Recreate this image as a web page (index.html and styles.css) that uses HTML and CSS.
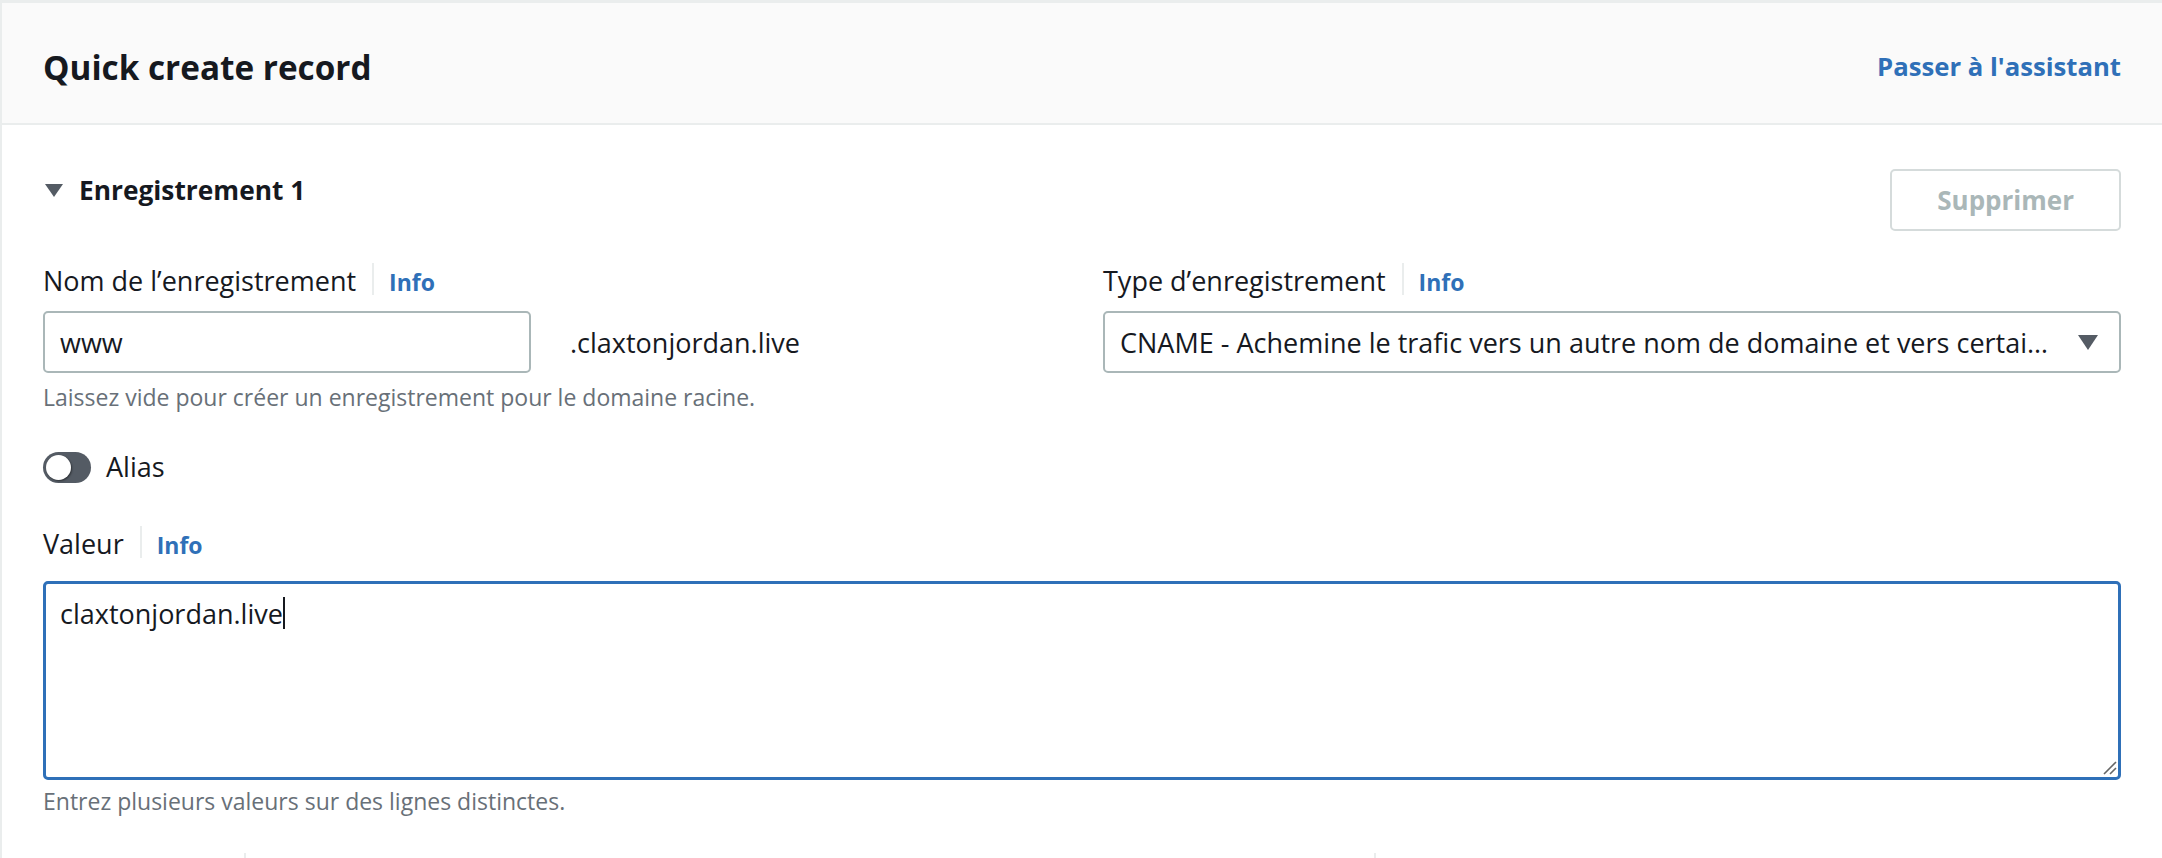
FILE: index.html
```html
<!DOCTYPE html>
<html lang="fr">
<head>
<meta charset="utf-8">
<title>Quick create record</title>
<link rel="stylesheet" href="styles.css">
</head>
<body>
<div class="card">
  <header class="card-header">
    <h2 class="card-title">Quick create record</h2>
    <a class="link-strong" href="#">Passer à l'assistant</a>
  </header>
  <div class="card-body">
    <section class="record">
      <div class="record-head">
        <div class="expander">
          <svg class="expander-icon" width="18" height="13" viewBox="0 0 18 13"><path d="M0 0 H18 L9 13 Z" fill="#545b64"/></svg>
          <span>Enregistrement 1</span>
        </div>
        <button class="btn" type="button" disabled>Supprimer</button>
      </div>

      <div class="grid">
        <div class="field">
          <div class="label-row"><span class="label">Nom de l’enregistrement</span><span class="sep"></span><a class="info" href="#">Info</a></div>
          <div class="name-row">
            <div class="input">www</div>
            <span class="suffix">.claxtonjordan.live</span>
          </div>
          <p class="hint">Laissez vide pour créer un enregistrement pour le domaine racine.</p>
        </div>
        <div class="field">
          <div class="label-row"><span class="label">Type d’enregistrement</span><span class="sep"></span><a class="info" href="#">Info</a></div>
          <div class="select">
            <span class="select-text">CNAME - Achemine le trafic vers un autre nom de domaine et vers certains enregistrements AWS</span>
            <svg class="select-arrow" width="20" height="15" viewBox="0 0 20 15"><path d="M0 0 H20 L10 15 Z" fill="#545b64"/></svg>
          </div>
        </div>
      </div>

      <div class="toggle-row">
        <span class="toggle"><span class="knob"></span></span>
        <span class="toggle-label">Alias</span>
      </div>

      <div class="field value-field">
        <div class="label-row"><span class="label">Valeur</span><span class="sep"></span><a class="info" href="#">Info</a></div>
        <div class="textarea"><span class="ta-text">claxtonjordan.live</span><span class="cursor"></span>
          <svg class="resize" width="14" height="14" viewBox="0 0 14 14"><path d="M13 1 L1 13 M13 7 L7 13" stroke="#666" stroke-width="1.6" fill="none"/></svg>
        </div>
        <p class="hint hint-tight">Entrez plusieurs valeurs sur des lignes distinctes.</p>
      </div>

      <div class="grid next-row">
        <div class="label-row"><span class="label">TTL (secondes)</span><span class="sep"></span><a class="info" href="#">Info</a></div>
        <div class="label-row"><span class="label">Politique de routage</span><span class="sep"></span><a class="info" href="#">Info</a></div>
      </div>
    </section>
  </div>
</div>
</body>
</html>
```

FILE: styles.css
```css
* { box-sizing: border-box; }

html, body {
  margin: 0;
  padding: 0;
  overflow: hidden;
  background: #ffffff;
}

body {
  font-family: "Open Sans", "Noto Sans", sans-serif;
  font-size: 27px;
  color: #16191f;
}

.card {
  border-top: 3px solid #eaeded;
  border-left: 2px solid #eaeded;
  min-height: 855px;
}

.card-header {
  height: 122px;
  padding: 7px 41px 0 41px;
  background: #fafafa;
  border-bottom: 2px solid #eaeded;
  display: flex;
  align-items: center;
  justify-content: space-between;
}

.card-title {
  margin: 0;
  font-size: 33.3px;
  font-weight: 700;
  line-height: 44px;
  color: #16191f;
}

.link-strong {
  font-size: 25.7px;
  font-weight: 700;
  color: #2f70b8;
  text-decoration: none;
  line-height: 40px;
}

.card-body {
  padding: 0 41px;
}

.record-head {
  margin-top: 44px;
  display: flex;
  justify-content: space-between;
  align-items: flex-start;
}

.expander {
  margin-top: 1px;
  display: flex;
  align-items: center;
  gap: 16px;
  font-size: 26.3px;
  font-weight: 700;
  line-height: 40px;
}

.expander-icon {
  margin-left: 2px;
}

.btn {
  height: 62px;
  padding: 0 45px;
  background: #ffffff;
  border: 2px solid #d5dbdb;
  border-radius: 5px;
  font-family: inherit;
  font-size: 26px;
  font-weight: 700;
  color: #aab7b8;
}

.grid {
  display: grid;
  grid-template-columns: minmax(0, 1fr) minmax(0, 1fr);
  column-gap: 42px;
  align-items: start;
}

.record-head + .grid {
  margin-top: 30px;
}

.field {
  min-width: 0;
}

.label-row {
  display: flex;
  align-items: baseline;
  height: 40px;
}

.label {
  line-height: 40px;
}

.sep {
  align-self: flex-start;
  margin: 2px 15px 0 16px;
  width: 2px;
  height: 32px;
  background: #eaeded;
}

.info {
  font-size: 23px;
  font-weight: 700;
  color: #2f70b8;
  text-decoration: none;
  line-height: 40px;
}

.name-row {
  margin-top: 10px;
  display: flex;
  align-items: center;
}

.input {
  width: 488px;
  height: 62px;
  padding: 0 15px;
  border: 2px solid #aab7b8;
  border-radius: 5px;
  display: flex;
  align-items: center;
}

.suffix {
  margin-left: 39px;
}

.hint {
  margin: 8px 0 0;
  font-size: 23px;
  line-height: 32px;
  color: #687078;
}

.hint-tight {
  margin-top: 5px;
}

.select {
  margin-top: 10px;
  height: 62px;
  padding: 0 21px 0 15px;
  border: 2px solid #aab7b8;
  border-radius: 5px;
  display: flex;
  align-items: center;
}

.select-text {
  flex: 1;
  min-width: 0;
  white-space: nowrap;
  overflow: hidden;
  text-overflow: ellipsis;
}

.select-arrow {
  flex: none;
  margin-left: 26px;
}

.toggle-row {
  margin-top: 34px;
  height: 40px;
  display: flex;
  align-items: center;
  gap: 15px;
}

.toggle {
  width: 48px;
  height: 31px;
  border-radius: 16px;
  background: #545b64;
  display: flex;
  align-items: center;
  padding-left: 3px;
}

.knob {
  width: 25px;
  height: 25px;
  border-radius: 50%;
  background: #ffffff;
  box-shadow: 1px 1px 2px rgba(0, 0, 0, 0.45);
}

.toggle-label {
  line-height: 40px;
}

.value-field {
  margin-top: 37px;
}

.textarea {
  position: relative;
  margin-top: 17px;
  height: 199px;
  padding: 10px 14px;
  border: 3px solid #2f70b8;
  border-radius: 5px;
  line-height: 40px;
  display: flex;
  align-items: flex-start;
}

.cursor {
  display: inline-block;
  width: 2px;
  height: 32px;
  margin-top: 3px;
  background: #16191f;
}

.resize {
  position: absolute;
  right: 1px;
  bottom: 2px;
}

.next-row {
  margin-top: 34px;
}

.next-row .label-row {
  align-items: flex-end;
}

.next-row .label,
.next-row .info {
  line-height: 32px;
}
```
